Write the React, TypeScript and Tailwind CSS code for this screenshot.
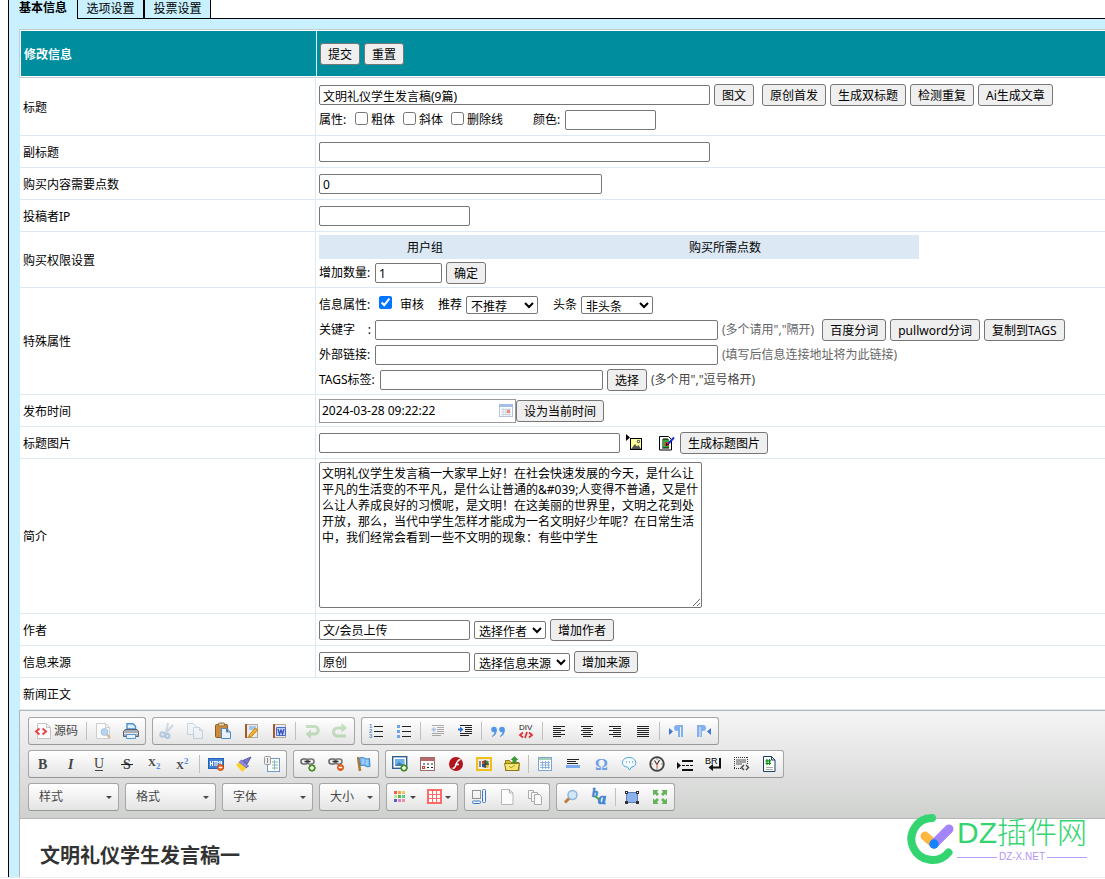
import { useState } from "react";
import type { ReactNode } from "react";
import clsx from "clsx";

const inputClass =
  "h-5 shrink-0 rounded-[2px] border border-[#767676] bg-white px-[3px] pt-px text-xs text-black";
const buttonClass =
  "h-[22px] shrink-0 rounded-[3px] border border-[#767676] bg-[#efefef] px-[7px] pt-[2px] text-xs leading-[18px] text-black whitespace-nowrap";
const selectClass =
  "h-[18px] shrink-0 rounded-[2px] border border-[#767676] bg-white text-xs leading-4 text-black";

const Btn = ({ children, className }: { children: ReactNode; className?: string }) => (
  <button type="button" className={clsx(buttonClass, className)}>
    {children}
  </button>
);

const Line = ({ children }: { children: ReactNode }) => (
  <div className="flex h-[25px] items-center gap-1 pt-[2px] whitespace-nowrap">{children}</div>
);

const Check = ({
  id,
  label,
  defaultChecked,
  wide,
}: {
  id: string;
  label: string;
  defaultChecked?: boolean;
  wide?: boolean;
}) => (
  <span className="ml-1 flex items-center">
    <input
      id={id}
      type="checkbox"
      defaultChecked={defaultChecked}
      className={clsx("mb-1 h-[13px] w-[13px]", wide ? "mr-2" : "mr-[3px]")}
    />
    <label htmlFor={id}>{label}</label>
  </span>
);

const Row = ({
  label,
  htmlFor,
  height = "h-8",
  children,
}: {
  label: string;
  htmlFor?: string;
  height?: string;
  children: ReactNode;
}) => (
  <tr className={height}>
    <th
      scope="row"
      className="w-[297px] border-r border-b border-l border-r-[#dbe9f5] border-b-[#dbe9f5] border-l-[#c8f0ff] pt-[2px] pl-[3px] text-left font-normal"
    >
      <label htmlFor={htmlFor}>{label}</label>
    </th>
    <td className="border-b border-[#dbe9f5] pl-[3px]">{children}</td>
  </tr>
);

/* ---------- toolbar icons, all on a 16px grid ---------- */

const Svg = ({ children }: { children: ReactNode }) => (
  <svg width="16" height="16" viewBox="0 0 16 16" fill="none" className="overflow-visible" aria-hidden="true">
    {children}
  </svg>
);

const serif = { fontFamily: "'Liberation Serif', serif", fontWeight: 700 };

const Page = () => (
  <path d="M2.5.5h8l3.5 3.5v11.5H2.5z M10.5.5v3.5h3.5" fill="#fcfcfc" stroke="#b5b5b5" />
);

const Chain = () => (
  <g fill="none" strokeWidth="1.6">
    <rect x="1" y="3" width="7" height="5" rx="2.5" stroke="#666" />
    <rect x="7" y="3" width="7" height="5" rx="2.5" stroke="#777" />
    <path d="M4.5 5.5h6" stroke="#333" />
  </g>
);

const Plus = () => (
  <>
    <circle cx="12" cy="12" r="3.2" fill="#55a630" stroke="#3b7d1c" />
    <path d="M12 10v4M10 12h4" stroke="#fff" strokeWidth="1.4" />
  </>
);

const Minus = () => (
  <>
    <circle cx="12.5" cy="11.5" r="3" fill="#f26522" stroke="#cf4a0c" />
    <path d="M10.8 11.5h3.4" stroke="#fff" strokeWidth="1.4" />
  </>
);

const bars = (rows: number[][], color = "#222") =>
  rows.map(([x, y, w]) => <rect key={y} x={x} y={y} width={w} height="1" fill={color} />);

const icons: Record<string, ReactNode> = {
  source: (
    <Svg>
      <path d="M2.5.5h9l4 4v11h-13z M11.5.5v4h4" fill="#fafafa" stroke="#c4c4c4" />
      <path d="M4.5 5.5L1 8.5l3.5 3M7.5 5.5l3.5 3-3.5 3" stroke="#e8474a" strokeWidth="2" />
    </Svg>
  ),
  preview: (
    <Svg>
      <path d="M1.5.5h9l4 4v11h-13z M10.5.5v4h4" fill="#fafafa" stroke="#cfcfcf" />
      <circle cx="9.5" cy="9" r="3.4" fill="#b4d5f2" stroke="#a4c3de" />
      <path d="M12 11.5l3 3.5" stroke="#d3b78c" strokeWidth="2" />
    </Svg>
  ),
  print: (
    <Svg>
      <path d="M4 6V.8h6l2.500 2.500V6z" fill="#dcedfc" stroke="#4f90cf" strokeWidth="1.4" />
      <path d="M2 6.5h12l1.500 2v5h-15v-5z" fill="#a8aeb6" stroke="#5a6068" />
      <path d="M1 10.5h14" stroke="#e8e8e8" />
      <path d="M3.5 11.5h9v4h-9z" fill="#e6f2fd" stroke="#5797d3" />
    </Svg>
  ),
  cut: (
    <Svg>
      <path d="M9 0L7 10M14 2L6 11" stroke="#8aa5bd" strokeWidth="2" />
      <circle cx="3.5" cy="11.5" r="2.2" stroke="#3f86c6" strokeWidth="2" />
      <circle cx="8.5" cy="13" r="2" stroke="#3f86c6" strokeWidth="2" />
    </Svg>
  ),
  copy: (
    <Svg>
      <path d="M.5.5h6l3 3v8h-9z" fill="#eef5fc" stroke="#6d9ac5" />
      <path d="M6.500 4.500h6l3 3v8h-9z M12.500 4.500v3h3" fill="#eef5fc" stroke="#6d9ac5" />
    </Svg>
  ),
  paste: (
    <Svg>
      <rect x=".5" y="1.500" width="12" height="13" rx="1" fill="#c98a3c" stroke="#8e5c1f" />
      <rect x="3.500" y="0" width="6" height="3" rx="1" fill="#e4cf9c" stroke="#8d7442" />
      <path d="M6.500 5.500h5l4 3.500v6.500h-9z M11.500 5.500v3.500h4" fill="#e6f1fc" stroke="#4b8acb" />
    </Svg>
  ),
  pastetext: (
    <Svg>
      <path d="M3.500 1.500h11v13h-11z" fill="#e6ecf2" stroke="#b5a890" />
      <path d="M2 1h2v14H2z" fill="#a6592b" />
      <path d="M6 4h7M6 6h6" stroke="#6aa0dd" />
      <path d="M12.500 5l2 2-6 6.500-3 1 1-3z" fill="#f5b52e" stroke="#c57c16" />
    </Svg>
  ),
  pasteword: (
    <Svg>
      <path d="M3.500 1.500h11v13h-11z" fill="#e6ecf2" stroke="#b5a890" />
      <path d="M2 1h2v14H2z" fill="#a6592b" />
      <path d="M5.500 4.500h9v8h-9z" fill="#c9d6f7" stroke="#4b69d0" />
      <path d="M7 6l1.500 5L10 7l1.500 4L13 6" stroke="#3350bd" strokeWidth="1.300" />
    </Svg>
  ),
  undo: (
    <Svg>
      <path d="M2 3.500h8.500a3.500 3.500 0 010 7.500H6" stroke="#68b45c" strokeWidth="3" />
      <path d="M7 6.500V16L1.500 11z" fill="#68b45c" />
    </Svg>
  ),
  redo: (
    <Svg>
      <path d="M10 5H5.500a3.500 3.500 0 000 8H14" stroke="#68b45c" strokeWidth="3" />
      <path d="M9.500 0v9.500L15 5z" fill="#68b45c" />
    </Svg>
  ),
  ol: (
    <Svg>
      {bars([[6, 3, 9], [6, 8, 9], [6, 13, 9]])}
      <g fill="#5b92d8" fontSize="6" fontFamily="Liberation Sans" fontWeight="700">
        <text x="1" y="5">1</text>
        <text x="1" y="10">2</text>
        <text x="1" y="15">3</text>
      </g>
    </Svg>
  ),
  ul: (
    <Svg>
      {bars([[6, 3, 9], [6, 8, 9], [6, 13, 9]])}
      <path d="M1 2h3v3H1zM1 7h3v3H1zM1 12h3v3H1z" fill="#6ea3e8" />
    </Svg>
  ),
  outdent: (
    <Svg>
      {bars([[3, 2, 12], [8, 4, 7], [8, 6, 7], [8, 8, 7], [3, 10, 12], [3, 12, 9]])}
      <path d="M2 6.500l3.500-3v6zM5 5.500h2v2H5z" fill="#2f74d0" />
    </Svg>
  ),
  indent: (
    <Svg>
      {bars([[3, 2, 12], [8, 4, 7], [8, 6, 7], [8, 8, 7], [3, 10, 12], [3, 12, 9]])}
      <path d="M6.500 6.500L3 3.500v6zM1 5.500h2v2H1z" fill="#2f74d0" />
    </Svg>
  ),
  quote: (
    <Svg>
      <g fill="#5196e8">
        <circle cx="4" cy="6.500" r="2.800" />
        <path d="M6.800 6.500c0 4-1.500 6-4.500 7.500l-.5-1c1.700-1 2.700-2.500 2.700-4.500z" />
        <circle cx="12" cy="6.500" r="2.800" />
        <path d="M14.800 6.500c0 4-1.500 6-4.500 7.500l-.5-1c1.700-1 2.700-2.500 2.700-4.500z" />
      </g>
    </Svg>
  ),
  div: (
    <Svg>
      <text x="1" y="7" fontSize="8" fontFamily="Liberation Sans" fill="#222">DIV</text>
      <path d="M5 9.500l-3 2.500 3 2.500M11 9.500l3 2.500-3 2.500M9 9l-2 6" stroke="#dc3434" strokeWidth="1.800" />
    </Svg>
  ),
  left: <Svg>{bars([[2, 3, 12], [2, 5, 8], [2, 7, 12], [2, 9, 8], [2, 11, 12], [2, 13, 8]])}</Svg>,
  center: <Svg>{bars([[2, 3, 12], [4, 5, 8], [2, 7, 12], [4, 9, 8], [2, 11, 12], [4, 13, 8]])}</Svg>,
  right: <Svg>{bars([[2, 3, 12], [6, 5, 8], [2, 7, 12], [6, 9, 8], [2, 11, 12], [6, 13, 8]])}</Svg>,
  justify: <Svg>{bars([[2, 3, 12], [2, 5, 12], [2, 7, 12], [2, 9, 12], [2, 11, 12], [2, 13, 12]])}</Svg>,
  ltr: (
    <Svg>
      <path d="M1 5l4 3.500L1 12z" fill="#3f77d0" />
      <path d="M15 2H9a3 3 0 000 6h1v6h2V4h1v10h2z" fill="#82b0ea" />
    </Svg>
  ),
  rtl: (
    <Svg>
      <path d="M15 5l-4 3.500 4 3.500z" fill="#3f77d0" />
      <path d="M1 2h6a3 3 0 010 6H6v6H4.500V4H3.500v10H1z" fill="#82b0ea" />
    </Svg>
  ),
  bold: <Svg><text x="3" y="13" fontSize="14" fill="#444" style={serif}>B</text></Svg>,
  italic: <Svg><text x="5" y="13" fontSize="14" fill="#444" fontStyle="italic" style={serif}>I</text></Svg>,
  underline: (
    <Svg>
      <text x="3" y="12" fontSize="14" fill="#444" fontFamily="Liberation Serif">U</text>
      <path d="M4 14.500h8" stroke="#444" />
    </Svg>
  ),
  strike: (
    <Svg>
      <text x="4" y="13" fontSize="14" fill="#444" style={serif}>S</text>
      <path d="M2 8.500h12" stroke="#222" />
    </Svg>
  ),
  sub: (
    <Svg>
      <text x="1" y="10" fontSize="11" fill="#444" style={serif}>X</text>
      <text x="9" y="13" fontSize="9" fill="#5b92e0" style={serif}>2</text>
    </Svg>
  ),
  sup: (
    <Svg>
      <text x="1" y="13" fontSize="11" fill="#444" style={serif}>X</text>
      <text x="9" y="8" fontSize="9" fill="#5b92e0" style={serif}>2</text>
    </Svg>
  ),
  html: (
    <Svg>
      <rect x=".5" y="2.500" width="15" height="10" fill="#3f83d9" stroke="#2762b4" />
      <path d="M2.500 5v5M4.500 5v5M2.500 7.500h2M5.500 5.500h3M7 5.500V10M9 10V5l1.500 2L12 5v5M13.500 5v5" stroke="#fff" />
      <Minus />
    </Svg>
  ),
  brush: (
    <Svg>
      <path d="M15 1l-4 7-4-3.500z" fill="#7a78cf" stroke="#5b59ad" />
      <path d="M5.500 4l7 6-2.500 2L3 6.500z" fill="#8e8ce0" stroke="#6462b8" />
      <path d="M3 6.500l7 5.500L6.500 16 0 9z" fill="#fbd12c" />
    </Svg>
  ),
  format: (
    <Svg>
      <rect x="3.500" y="2.500" width="12" height="13" fill="#fff" stroke="#6c9ccf" />
      <path d="M8 6h6M8 9h6M8 12h6" stroke="#7fb58a" />
      <path d="M10.500 4v10" stroke="#8ab5e2" />
      <rect x=".5" y=".5" width="6" height="8" rx="1" fill="#eee" stroke="#999" />
      <path d="M3.500 2v5" stroke="#888" />
    </Svg>
  ),
  link: <Svg><Chain /><Plus /></Svg>,
  unlink: <Svg><Chain /><Minus /></Svg>,
  flag: (
    <Svg>
      <path d="M2 1l2 14" stroke="#b5752e" strokeWidth="2.500" />
      <path d="M3.500 2c4-2 5 2 10 .5l.5 8c-4 1.500-5-2.500-9.500-1z" fill="#7cbcf2" stroke="#3e88c8" />
      <path d="M7 3v5M11 4v5" stroke="#fff" strokeOpacity=".5" />
    </Svg>
  ),
  image: (
    <Svg>
      <rect x=".7" y=".7" width="14" height="11.600" fill="#fff" stroke="#2f5f92" strokeWidth="1.400" />
      <rect x="3" y="3" width="9.500" height="7" fill="#6fb0e6" />
      <path d="M3 10l4-4 5.500 4z" fill="#3c7bb5" />
      <Plus />
    </Svg>
  ),
  gallery: (
    <Svg>
      <rect x=".5" y="1.500" width="14" height="13" fill="#fff" stroke="#9b6a6a" />
      <path d="M.5 2h14v3H.5z" fill="#b76a6a" />
      <path d="M3 8h2M7 8h2M11 8h2M7 11.500h2M11 11.500h2" stroke="#222" />
      <rect x="2.500" y="10.500" width="2" height="2" fill="#fff" stroke="#d33" />
    </Svg>
  ),
  flash: (
    <Svg>
      <circle cx="8" cy="8" r="7" fill="#b3141b" />
      <path d="M12.500 3.500c-5 0-3.500 9-8 9M7 8.500h4" stroke="#fff" strokeWidth="1.600" />
    </Svg>
  ),
  media: (
    <Svg>
      <rect x="1" y="2" width="14" height="12" fill="#ededed" stroke="#f5bd17" strokeWidth="2" />
      <path d="M6 5l3-.5v3H6z" fill="#d43a2c" />
      <path d="M9.500 4.500l3 .5v3h-3z" fill="#3a8a3a" />
      <path d="M6 8.500h3v3L6 11z" fill="#2d51b5" />
      <path d="M9.500 8.500h3V12l-3-.5z" fill="#e9b30f" />
      <path d="M3 6h2M3 8h2M3 10h2M9.200 4v8M6 8.200h7" stroke="#222" />
    </Svg>
  ),
  upload: (
    <Svg>
      <path d="M1.500 4.500h4l1.500 2h8v8h-13.500z" fill="#d9bd2e" stroke="#8e7916" />
      <path d="M.5 7.500h15l-1.500 7H2z" fill="#f5e571" stroke="#8e7916" />
      <path d="M10.500 0l4 4h-2v3h-4V4h-2z" fill="#3d9a33" />
      <path d="M5 10l2 2 4-3" stroke="#b49c1e" />
    </Svg>
  ),
  table: (
    <Svg>
      <rect x="1.500" y="1.500" width="13" height="13" fill="#fff" stroke="#7ba6d8" />
      <path d="M2 2h12v2H2z" fill="#a9cdb0" />
      <path d="M3 6.500h10M3 9h10M3 11.500h10M5.500 5v8M8.500 5v8M11.500 5v8" stroke="#8cb3e0" />
    </Svg>
  ),
  hr: (
    <Svg>
      {bars([[2, 3, 12], [2, 5, 9], [2, 7, 11]])}
      <rect x="1" y="9" width="14" height="3" fill="#7aa9ee" />
    </Svg>
  ),
  omega: <Svg><text x="2" y="14" fontSize="16" fill="#6d9fe8" style={serif}>Ω</text></Svg>,
  bubble: (
    <Svg>
      <path d="M8 1.500c8 0 9 9 2.500 9.500L8.500 14 6.500 11C-1 10.500 0 1.500 8 1.500z" fill="#f4fbff" stroke="#4ca5d5" />
      <path d="M5 6h1M8 6h1M11 6h1" stroke="#3988b5" strokeWidth="1.200" />
    </Svg>
  ),
  clock: (
    <Svg>
      <circle cx="8" cy="8" r="6.800" fill="#f3f0ec" stroke="#444" strokeWidth="1.800" />
      <path d="M8 8.500L5.500 4.500M8 8.500l2.500-4.500" stroke="#333" strokeWidth="1.100" />
      <path d="M8 7v5" stroke="#c2554a" />
      <path d="M8 2.500v1M8 12.500v1M2.500 8h1M12.500 8h1" stroke="#333" />
    </Svg>
  ),
  pagebreak: (
    <Svg>
      <path d="M0 6l4 3.500L0 13z" fill="#111" />
      <path d="M5 5h11M5 14h11" stroke="#111" strokeWidth="2" />
      <path d="M5 9.500h3M9 9.500h3M13 9.500h3" stroke="#111" />
    </Svg>
  ),
  br: (
    <Svg>
      <text x="0" y="8" fontSize="9" fontFamily="Liberation Sans" fill="#000">BR</text>
      <path d="M15 2v9.500H7" stroke="#111" strokeWidth="2" />
      <path d="M8 8v7l-4.500-3.500z" fill="#111" />
    </Svg>
  ),
  template: (
    <Svg>
      <path d="M1 1.500h14M1 12.500h7M1.500 1v12M14.500 1v7" stroke="#333" strokeDasharray="1 1" />
      <path d="M3 4h10M3 6h10M3 8h6" stroke="#555" />
      <path d="M11 9l-2.500 2.500L11 14M13 9l2.500 2.500L13 14" stroke="#444" strokeWidth="1.400" />
    </Svg>
  ),
  hash: (
    <Svg>
      <path d="M2.500.5h8l3.500 3.500v11.500H2.500z M10.500.5v3.500h3.500" fill="#fff" stroke="#1d3f66" />
      <path d="M6 3v6M8.500 3v6M4.500 4.800h5.500M4.500 7.300h5.500" stroke="#118a1c" strokeWidth="1.200" />
      <path d="M5 11.500h7M5 13.500h7" stroke="#aaa" />
    </Svg>
  ),
  blocks: (
    <Svg>
      <rect x="1.500" y="1.500" width="8" height="8" stroke="#333" strokeDasharray="1 1" />
      <rect x="11.500" y=".5" width="3" height="13" rx="1" fill="#eaf3ff" stroke="#3f78bd" />
      <rect x="1.500" y="12" width="8" height="2.500" rx="1" fill="#eaf3ff" stroke="#3f78bd" />
    </Svg>
  ),
  newpage: <Svg><Page /></Svg>,
  pages: (
    <Svg>
      <path d="M1.500 1.500h5v8h-5z" fill="#fafafa" stroke="#aaa" />
      <path d="M4.500 3.500h6v9h-6z" fill="#fafafa" stroke="#aaa" />
      <path d="M7.500 5.500h5l2 2v8h-7z" fill="#fafafa" stroke="#aaa" />
    </Svg>
  ),
  find: (
    <Svg>
      <circle cx="9.500" cy="6" r="4.500" fill="#cfe6fb" stroke="#8eb5da" strokeWidth="1.500" />
      <path d="M6 9.500L2 13.500" stroke="#c07a3a" strokeWidth="3" />
    </Svg>
  ),
  replace: (
    <Svg>
      <g fill="#3b84d6" stroke="#3b84d6" strokeWidth=".6" fontStyle="italic" style={serif}>
        <text x="1" y="8" fontSize="12">b</text>
        <text x="7" y="15" fontSize="16">a</text>
      </g>
      <path d="M4 7l4 3.500" stroke="#4da648" strokeWidth="2" />
    </Svg>
  ),
  selectall: (
    <Svg>
      <rect x="2.500" y="3.500" width="11" height="10" fill="#8cb1ea" stroke="#5a7fbd" />
      <path d="M1 2h3v3H1zM12 2h3v3h-3zM1 12h3v3H1zM12 12h3v3h-3z" fill="#333" />
      <path d="M2 3h1v1H2zM13 3h1v1h-1z" fill="#fff" />
    </Svg>
  ),
  maximize: (
    <Svg>
      <path
        d="M1 1h5.500L5 3l2 2-2 2-2-2-2 1.500zM15 1v5.500L13 5l-2 2-2-2 2-2-1.500-2zM1 15V9.500L3 11l2-2 2 2-2 2 1.500 2zM15 15H9.500l1.500-2-2-2 2-2 2 2 2-1.500z"
        fill="#66b35c"
      />
    </Svg>
  ),
  textcolor: (
    <Svg>
      {["#f55", "#f8a04a", "#f0cb5c", "#bfe296", "#51b849", "#51d08f", "#5b5bd0", "#d785d7", "#ff8f8f"].map(
        (c, i) => (
          <rect key={c} x={2 + (i % 3) * 4} y={2 + Math.floor(i / 3) * 4} width="3" height="3" fill={c} />
        )
      )}
    </Svg>
  ),
  bgcolor: (
    <Svg>
      <path d="M0 0h15v15H0z" fill="#ff6a66" />
      {[0, 1, 2].map((r) =>
        [0, 1, 2].map((c) => (
          <rect key={`${r}${c}`} x={2 + c * 4} y={2 + r * 4} width="3" height="3" fill="#fff" />
        ))
      )}
    </Svg>
  ),
};

type Tool = { icon?: string; title?: string; off?: boolean; text?: string; menu?: boolean };
const sep: Tool = {};
const t = (icon: string, title: string, extra: Partial<Tool> = {}): Tool => ({ icon, title, ...extra });

const rowOne: Tool[][] = [
  [t("source", "源码", { text: "源码" }), sep, t("preview", "预览"), t("print", "打印")],
  [
    t("cut", "剪切", { off: true }),
    t("copy", "复制", { off: true }),
    t("paste", "粘贴"),
    t("pastetext", "粘贴为纯文本"),
    t("pasteword", "从 Word 粘贴"),
    sep,
    t("undo", "撤消", { off: true }),
    t("redo", "重做", { off: true }),
  ],
  [
    t("ol", "编号列表"),
    t("ul", "项目列表"),
    sep,
    t("outdent", "减少缩进量", { off: true }),
    t("indent", "增加缩进量"),
    sep,
    t("quote", "块引用"),
    t("div", "创建 DIV 容器"),
    sep,
    t("left", "左对齐"),
    t("center", "居中"),
    t("right", "右对齐"),
    t("justify", "两端对齐"),
    sep,
    t("ltr", "文字方向为从左至右"),
    t("rtl", "文字方向为从右至左"),
  ],
];

const rowTwo: Tool[][] = [
  [
    t("bold", "加粗"),
    t("italic", "倾斜"),
    t("underline", "下划线"),
    t("strike", "删除线"),
    t("sub", "下标"),
    t("sup", "上标"),
    sep,
    t("html", "清除 HTML"),
    t("brush", "清除格式"),
    t("format", "自动排版"),
  ],
  [t("link", "超链接"), t("unlink", "取消超链接"), t("flag", "锚点")],
  [
    t("image", "图像"),
    t("gallery", "图集"),
    t("flash", "Flash"),
    t("media", "视频"),
    t("upload", "附件"),
    sep,
    t("table", "表格"),
    t("hr", "水平线"),
    t("omega", "特殊符号"),
    t("bubble", "表情"),
    t("clock", "时间"),
    t("pagebreak", "分页符"),
    t("br", "换行"),
    t("template", "代码"),
    t("hash", "标签"),
  ],
];

const rowThree: Tool[][] = [
  [t("textcolor", "文本颜色", { menu: true }), t("bgcolor", "背景颜色", { menu: true })],
  [t("blocks", "显示区块"), t("newpage", "新建"), t("pages", "模板")],
  [t("find", "查找"), t("replace", "替换"), sep, t("selectall", "全选"), t("maximize", "全屏")],
];

const combos = [
  { label: "样式", width: "w-[91px]" },
  { label: "格式", width: "w-[91px]" },
  { label: "字体", width: "w-[91px]" },
  { label: "大小", width: "w-[61px]" },
];

const boxClass =
  "flex h-7 shrink-0 items-center rounded-[3px] border border-[#a6a6a6] border-b-[#979797] bg-linear-to-b from-white to-[#e4e4e4]";

const Caret = () => (
  <span className="border-x-[3px] border-t-[3px] border-x-transparent border-t-[#474747]" />
);

const Group = ({ tools }: { tools: Tool[] }) => (
  <div className={boxClass}>
    {tools.map((tool, i) =>
      !tool.icon ? (
        <span key={i} className="mx-[2px] h-[18px] w-px bg-[#c0c0c0]" />
      ) : (
        <button
          key={i}
          type="button"
          title={tool.title}
          aria-label={tool.title}
          className={clsx(
            "flex h-[26px] items-center",
            tool.text ? "w-[55px] gap-[3px] pl-[6px]" : tool.menu ? "w-[35px] gap-[2px] pl-[5px]" : "w-7 justify-center"
          )}
        >
          <span className={clsx("shrink-0", tool.off && "opacity-35")}>{icons[tool.icon]}</span>
          {tool.text && <span className="whitespace-nowrap text-[#474747]">{tool.text}</span>}
          {tool.menu && <Caret />}
        </button>
      )
    )}
  </div>
);

const Editor = () => (
  <div className="ml-[10px] border-t border-l border-[#b6b6b6] bg-white">
    <div className="flex flex-col gap-[5px] border-b border-[#b6b6b6] bg-linear-to-b from-[#f5f5f5] to-[#cfd1cf] px-2 pt-[6px] pb-[7px]">
      <div className="flex gap-[6px]">
        {rowOne.map((tools, i) => (
          <Group key={i} tools={tools} />
        ))}
      </div>
      <div className="flex gap-[6px]">
        {rowTwo.map((tools, i) => (
          <Group key={i} tools={tools} />
        ))}
      </div>
      <div className="flex gap-[6px]">
        {combos.map((combo) => (
          <button
            key={combo.label}
            type="button"
            className={clsx(boxClass, combo.width, "justify-between pr-[6px] pl-[10px] text-[#474747]")}
          >
            {combo.label}
            <Caret />
          </button>
        ))}
        {rowThree.map((tools, i) => (
          <Group key={i} tools={tools} />
        ))}
      </div>
    </div>
    <div className="px-5 pt-[22px] pb-[7px]">
      <h2 className="text-xl leading-[29px] font-bold text-[#333]">文明礼仪学生发言稿一</h2>
    </div>
  </div>
);

const CalendarIcon = () => (
  <svg width="14" height="13" viewBox="0 0 14 13" fill="none" aria-hidden="true">
    <rect x=".5" y=".5" width="13" height="12" fill="#fff" stroke="#b5c3dd" />
    <path d="M0 0h14v3H0z" fill="#a3bfe9" />
    <path d="M2 5.500h10M2 8h10M2 10.500h10M4 4v8M7 4v8M10 4v8" stroke="#c9d3e4" />
    <rect x="8" y="6" width="3" height="3" fill="#ee8f6c" />
  </svg>
);

const PickImageIcon = () => (
  <svg width="17" height="17" viewBox="0 0 17 17" fill="none" aria-hidden="true">
    <path d="M0 0l4 3.500L0 7z" fill="#000" />
    <rect x="4.500" y="4.500" width="11" height="11" fill="#ffff9c" stroke="#000" />
    <path d="M5 15l4-5 2 2.500 1.500-1.500 2.500 4z" fill="#555" />
    <circle cx="12.500" cy="7.500" r="1.200" fill="#fff" stroke="#000" strokeWidth=".8" />
  </svg>
);

const EditImageIcon = () => (
  <svg width="16" height="16" viewBox="0 0 16 16" fill="none" aria-hidden="true">
    <path d="M.5 1.500h9l3 3v10.500H.5z" fill="#fff" stroke="#000" />
    <path d="M4 4h6v9H4z" fill="#2fae3c" />
    <path d="M3 5h1M3 7h1M3 9h1M3 11h1M3 13h7M4 4h5" stroke="#000" />
    <path d="M6 7h4v4H6z" fill="#e23131" />
    <path d="M7.500 8v3M7 9.500h3" stroke="#000" strokeWidth=".8" />
    <path d="M15 2.500L9.500 8.500" stroke="#1b2fd0" strokeWidth="2" />
  </svg>
);

const Watermark = () => (
  <div className="pointer-events-none absolute right-[18px] bottom-3 flex items-center gap-[3px] font-['Liberation_Sans','Noto_Sans_CJK_SC',sans-serif]">
    <svg width="48" height="52" viewBox="0 0 48 52" fill="none" aria-hidden="true">
      <path d="M26 5A21 21 0 1 0 42.500 39.500" stroke="#34d571" strokeWidth="8" strokeLinecap="round" />
      <path d="M19 23l9 8" stroke="#fdb63f" strokeWidth="9" strokeLinecap="round" />
      <path d="M28 31l15-15" stroke="#a484fb" strokeWidth="9" strokeLinecap="round" />
      <circle cx="28" cy="31" r="4.700" fill="#1583fb" />
    </svg>
    <div className="flex flex-col">
      <span className="text-[30px] leading-9 font-light whitespace-nowrap text-[#34d571]">DZ插件网</span>
      <span className="flex items-center gap-[2px] text-[10px] leading-3 text-[#b395f8]">
        <span className="h-px flex-1 bg-[#b8a0f8]" />
        DZ-X.NET
        <span className="h-px flex-1 bg-[#b8a0f8]" />
      </span>
    </div>
  </div>
);

const intro =
  "文明礼仪学生发言稿一大家早上好！在社会快速发展的今天，是什么让平凡的生活变的不平凡，是什么让普通的&#039;人变得不普通，又是什么让人养成良好的习惯呢，是文明！在这美丽的世界里，文明之花到处开放，那么，当代中学生怎样才能成为一名文明好少年呢？在日常生活中，我们经常会看到一些不文明的现象：有些中学生";

const tabs = ["基本信息", "选项设置", "投票设置"];

export default function App() {
  const [active, setActive] = useState(0);

  return (
    <div className="min-h-screen overflow-hidden bg-white font-['Noto_Sans','Noto_Sans_CJK_SC',sans-serif] text-xs leading-4 text-black">
      <div className="relative border-b border-[#eeeeee]">
        <div className="ml-2 border-l border-black bg-[#c8f0ff]">
          <div className="flex h-[19px] bg-white">
            {tabs.map((tab, i) => (
              <button
                key={tab}
                type="button"
                onClick={() => setActive(i)}
                className={clsx(
                  "shrink-0 bg-[#c8f0ff] text-center",
                  i === active ? "w-[68px] pb-[5px] font-bold" : "w-[67px] border-x border-b border-black"
                )}
              >
                {tab}
              </button>
            ))}
            <div className="flex-1 border-b border-black" />
          </div>

          <form className="pt-[10px]" onSubmit={(e) => e.preventDefault()}>
            <div className="pl-[10px]">
              <table className="w-full table-fixed border-separate border-spacing-0 bg-white">
                <thead>
                  <tr className="h-[49px]">
                    <th className="w-[297px] border-y border-l border-[#c3ccd4] bg-[#008e9e] pt-[2px] pl-1 text-left font-bold text-white shadow-[inset_1px_1px_0_#fff,inset_0_-1px_0_#fff]">
                      修改信息
                    </th>
                    <td className="border-y border-l border-y-[#c3ccd4] border-l-[#e4eef2] bg-[#008e9e] pl-[3px] shadow-[inset_0_1px_0_#fff,inset_0_-1px_0_#fff]">
                      <div className="flex gap-1">
                        <button type="submit" className={buttonClass}>
                          提交
                        </button>
                        <button type="reset" className={buttonClass}>
                          重置
                        </button>
                      </div>
                    </td>
                  </tr>
                </thead>
                <tbody>
                  <Row label="标题" htmlFor="title" height="h-[58px]">
                    <Line>
                      <input id="title" defaultValue="文明礼仪学生发言稿(9篇)" className={clsx(inputClass, "w-[391px]")} />
                      <Btn className="mr-1">图文</Btn>
                      <Btn>原创首发</Btn>
                      <Btn>生成双标题</Btn>
                      <Btn>检测重复</Btn>
                      <Btn>Ai生成文章</Btn>
                    </Line>
                    <Line>
                      <span className="w-7">属性:</span>
                      <Check id="bold" label="粗体" />
                      <Check id="italic" label="斜体" />
                      <Check id="strike" label="删除线" />
                      <label htmlFor="color" className="ml-[26px] w-7">
                        颜色:
                      </label>
                      <input id="color" className={clsx(inputClass, "w-[91px]")} />
                    </Line>
                  </Row>
                  <Row label="副标题" htmlFor="subtitle">
                    <input id="subtitle" className={clsx(inputClass, "block w-[391px]")} />
                  </Row>
                  <Row label="购买内容需要点数" htmlFor="points">
                    <input id="points" defaultValue="0" className={clsx(inputClass, "block w-[283px]")} />
                  </Row>
                  <Row label="投稿者IP" htmlFor="ip">
                    <input id="ip" className={clsx(inputClass, "block w-[151px]")} />
                  </Row>
                  <Row label="购买权限设置" htmlFor="count" height="h-14">
                    <table className="w-[600px] border-collapse bg-[#dce9f5]">
                      <thead>
                        <tr className="h-6">
                          <th className="w-[212px] pt-[2px] font-normal">用户组</th>
                          <th className="pt-[2px] font-normal">购买所需点数</th>
                        </tr>
                      </thead>
                    </table>
                    <Line>
                      <label htmlFor="count" className="w-[52px]">
                        增加数量:
                      </label>
                      <input id="count" defaultValue="1" className={clsx(inputClass, "w-[67px]")} />
                      <Btn>确定</Btn>
                    </Line>
                  </Row>
                  <Row label="特殊属性" height="h-[107px]">
                    <Line>
                      <span className="w-[52px]">信息属性:</span>
                      <Check id="checked" label="审核" defaultChecked wide />
                      <label htmlFor="recommend" className="ml-[10px]">
                        推荐
                      </label>
                      <select id="recommend" className={clsx(selectClass, "w-[72px]")}>
                        <option>不推荐</option>
                      </select>
                      <label htmlFor="headline" className="ml-[11px]">
                        头条
                      </label>
                      <select id="headline" className={clsx(selectClass, "w-[72px]")}>
                        <option>非头条</option>
                      </select>
                    </Line>
                    <Line>
                      <label htmlFor="keywords" className="flex w-[52px] justify-between">
                        关键字<span>:</span>
                      </label>
                      <input id="keywords" className={clsx(inputClass, "w-[343px]")} />
                      <span className="mr-1 text-[#666]">(多个请用","隔开)</span>
                      <Btn>百度分词</Btn>
                      <Btn>pullword分词</Btn>
                      <Btn>复制到TAGS</Btn>
                    </Line>
                    <Line>
                      <label htmlFor="url" className="w-[52px]">
                        外部链接:
                      </label>
                      <input id="url" className={clsx(inputClass, "w-[343px]")} />
                      <span className="text-[#666]">(填写后信息连接地址将为此链接)</span>
                    </Line>
                    <Line>
                      <label htmlFor="tags" className="w-[57px]">
                        TAGS标签:
                      </label>
                      <input id="tags" className={clsx(inputClass, "w-[223px]")} />
                      <Btn>选择</Btn>
                      <span className="text-[#444]">(多个用","逗号格开)</span>
                    </Line>
                  </Row>
                  <Row label="发布时间" htmlFor="time">
                    <div className="flex items-center">
                      <div className="flex h-6 w-[197px] items-center border border-[#999] bg-white px-[2px]">
                        <input id="time" defaultValue="2024-03-28 09:22:22" className="min-w-0 flex-1 pt-px text-xs" />
                        <CalendarIcon />
                      </div>
                      <Btn>设为当前时间</Btn>
                    </div>
                  </Row>
                  <Row label="标题图片" htmlFor="pic">
                    <div className="flex items-center">
                      <input id="pic" className={clsx(inputClass, "w-[301px]")} />
                      <button type="button" aria-label="选择图片" className="ml-[6px]">
                        <PickImageIcon />
                      </button>
                      <button type="button" aria-label="编辑图片" className="mr-[5px] ml-4">
                        <EditImageIcon />
                      </button>
                      <Btn>生成标题图片</Btn>
                    </div>
                  </Row>
                  <Row label="简介" htmlFor="intro" height="h-[155px]">
                    <textarea
                      id="intro"
                      defaultValue={intro}
                      className="mb-[2px] block h-[146px] w-[383px] resize rounded-[2px] border border-[#767676] bg-white px-[2px] py-[3px] text-xs leading-4"
                    />
                  </Row>
                  <Row label="作者" htmlFor="author">
                    <div className="flex items-center gap-1">
                      <input id="author" defaultValue="文/会员上传" className={clsx(inputClass, "w-[151px]")} />
                      <select aria-label="选择作者" className={clsx(selectClass, "w-[72px]")}>
                        <option>选择作者</option>
                      </select>
                      <Btn>增加作者</Btn>
                    </div>
                  </Row>
                  <Row label="信息来源" htmlFor="origin">
                    <div className="flex items-center gap-1">
                      <input id="origin" defaultValue="原创" className={clsx(inputClass, "w-[151px]")} />
                      <select aria-label="选择信息来源" className={clsx(selectClass, "w-24")}>
                        <option>选择信息来源</option>
                      </select>
                      <Btn>增加来源</Btn>
                    </div>
                  </Row>
                  <tr className="h-8">
                    <th
                      colSpan={2}
                      className="border-b border-l border-b-[#dbe9f5] border-l-[#c8f0ff] pt-[2px] pl-[3px] text-left font-normal"
                    >
                      新闻正文
                    </th>
                  </tr>
                </tbody>
              </table>
            </div>
            <Editor />
          </form>
        </div>
        <Watermark />
      </div>
    </div>
  );
}
